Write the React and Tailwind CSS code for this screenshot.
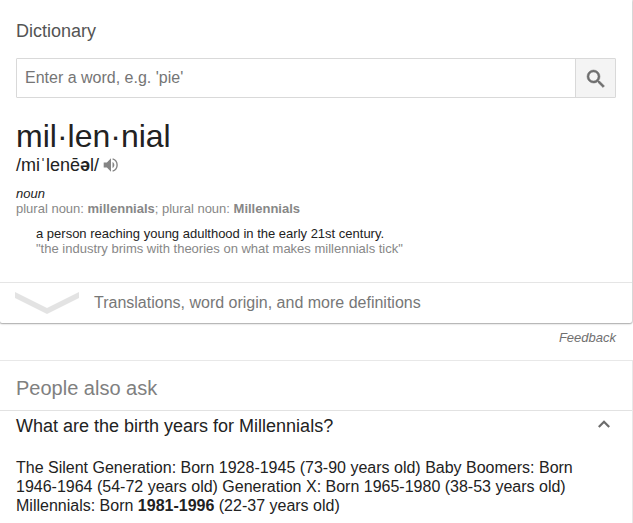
import React from 'react';

function SearchIcon() {
  return (
    <svg className="mt-0.5 w-6 h-6 text-[#6f6f6f]" viewBox="0 0 24 24" fill="currentColor" stroke="currentColor" strokeWidth="0.5">
      <path d="M15.5 14h-.79l-.28-.27A6.471 6.471 0 0 0 16 9.5 6.5 6.5 0 1 0 9.5 16c1.61 0 3.09-.59 4.23-1.57l.27.28v.79l5 4.99L20.49 19l-4.99-5zm-6 0C7.01 14 5 11.99 5 9.5S7.01 5 9.5 5 14 7.01 14 9.5 11.99 14 9.5 14z" />
    </svg>
  );
}

function SpeakerIcon() {
  return (
    <svg className="w-4 h-4 text-[#858585]" viewBox="0 0 16 16">
      <path d="M.7 5.4h3.2L8 1.3v13.4l-4.1-4.1H.7z" fill="currentColor" />
      <path d="M9.5 5c1.2.6 1.8 1.7 1.8 3s-.6 2.4-1.8 3z" fill="currentColor" />
      <path d="M9.6 1.9c2.6.8 4.5 3.2 4.5 6.1s-1.9 5.3-4.5 6.1" fill="none" stroke="currentColor" strokeWidth="1.4" />
    </svg>
  );
}

export default function App() {
  return (
    <div className="w-full h-[523px] overflow-hidden bg-white font-['Liberation_Sans',Arial,sans-serif] text-[#222222]">
      {/* Dictionary card */}
      <section className="w-[632px] h-[323px] flex flex-col rounded-b-[2px] bg-white shadow-[0_1px_2px_rgba(0,0,0,0.28),0_0_0_1px_rgba(0,0,0,0.09)]">
        <div className="h-[282px] px-4 pt-5">
          <h2 className="text-[18px] leading-[22px] text-[#545454]">Dictionary</h2>

          <form className="mt-4 flex h-10 w-[600px] rounded-[1px] border border-[#d9d9d9]">
            <input
              type="text"
              placeholder="Enter a word, e.g. 'pie'"
              className="min-w-0 flex-1 px-2 text-base outline-none placeholder:text-[#757575]"
            />
            <button type="button" className="flex w-10 items-center justify-center border-l border-[#d9d9d9] bg-[#f4f4f4]">
              <SearchIcon />
            </button>
          </form>

          <h1 className="mt-5 text-[32px] leading-9">mil·len·nial</h1>
          <div className="flex items-center gap-1 text-[18px] leading-[22px]">
            <span>/miˈlenē<b>ə</b>l/</span>
            <SpeakerIcon />
          </div>

          <div className="mt-2.5 text-[13px] leading-[15px]">
            <p className="italic">noun</p>
            <p className="text-[#878787]">
              plural noun: <b>millennials</b>; plural noun: <b>Millennials</b>
            </p>
            <div className="ml-5 mt-2.5">
              <p>a person reaching young adulthood in the early 21st century.</p>
              <p className="text-[#878787]">"the industry brims with theories on what makes millennials tick"</p>
            </div>
          </div>
        </div>

        <div className="flex h-[41px] items-center border-t border-[#e5e5e5] pl-[15px]">
          <svg className="h-[22px] w-16" viewBox="0 0 64 22" fill="#e3e3e3">
            <path d="M0 0l32 16L64 0v6L32 22 0 6z" />
          </svg>
          <span className="ml-[15px] text-base text-[#777777]">Translations, word origin, and more definitions</span>
        </div>
      </section>

      <div className="flex h-[38px] justify-end pr-[17px] pt-[7px] text-[13px] leading-[15px] italic text-[#707070]">Feedback</div>

      {/* People also ask */}
      <section className="h-[162px] w-[632px] bg-white shadow-[0_0_0_1px_rgba(0,0,0,0.09)]">
        <h2 className="h-[50px] border-b border-[#e2e2e2] px-4 pt-[15px] text-[20px] leading-6 text-[#808080]">People also ask</h2>
        <div className="flex h-[30px] items-center justify-between pl-4 pr-[22px]">
          <span className="text-[18px] leading-[22px]">What are the birth years for Millennials?</span>
          <svg className="mb-[5px] h-2 w-3" viewBox="0 0 12 8" fill="none" stroke="#6c6c6c" strokeWidth="2.2">
            <path d="M.8 7L6 1.8 11.2 7" />
          </svg>
        </div>
        <p className="w-[590px] pl-4 pt-[17px] text-base leading-[19px]">
          The Silent Generation: Born 1928-1945 (73-90 years old) Baby Boomers: Born 1946-1964 (54-72 years old) Generation X: Born 1965-1980 (38-53 years old) Millennials: Born <b>1981-1996</b> (22-37 years old)
        </p>
      </section>
    </div>
  );
}
